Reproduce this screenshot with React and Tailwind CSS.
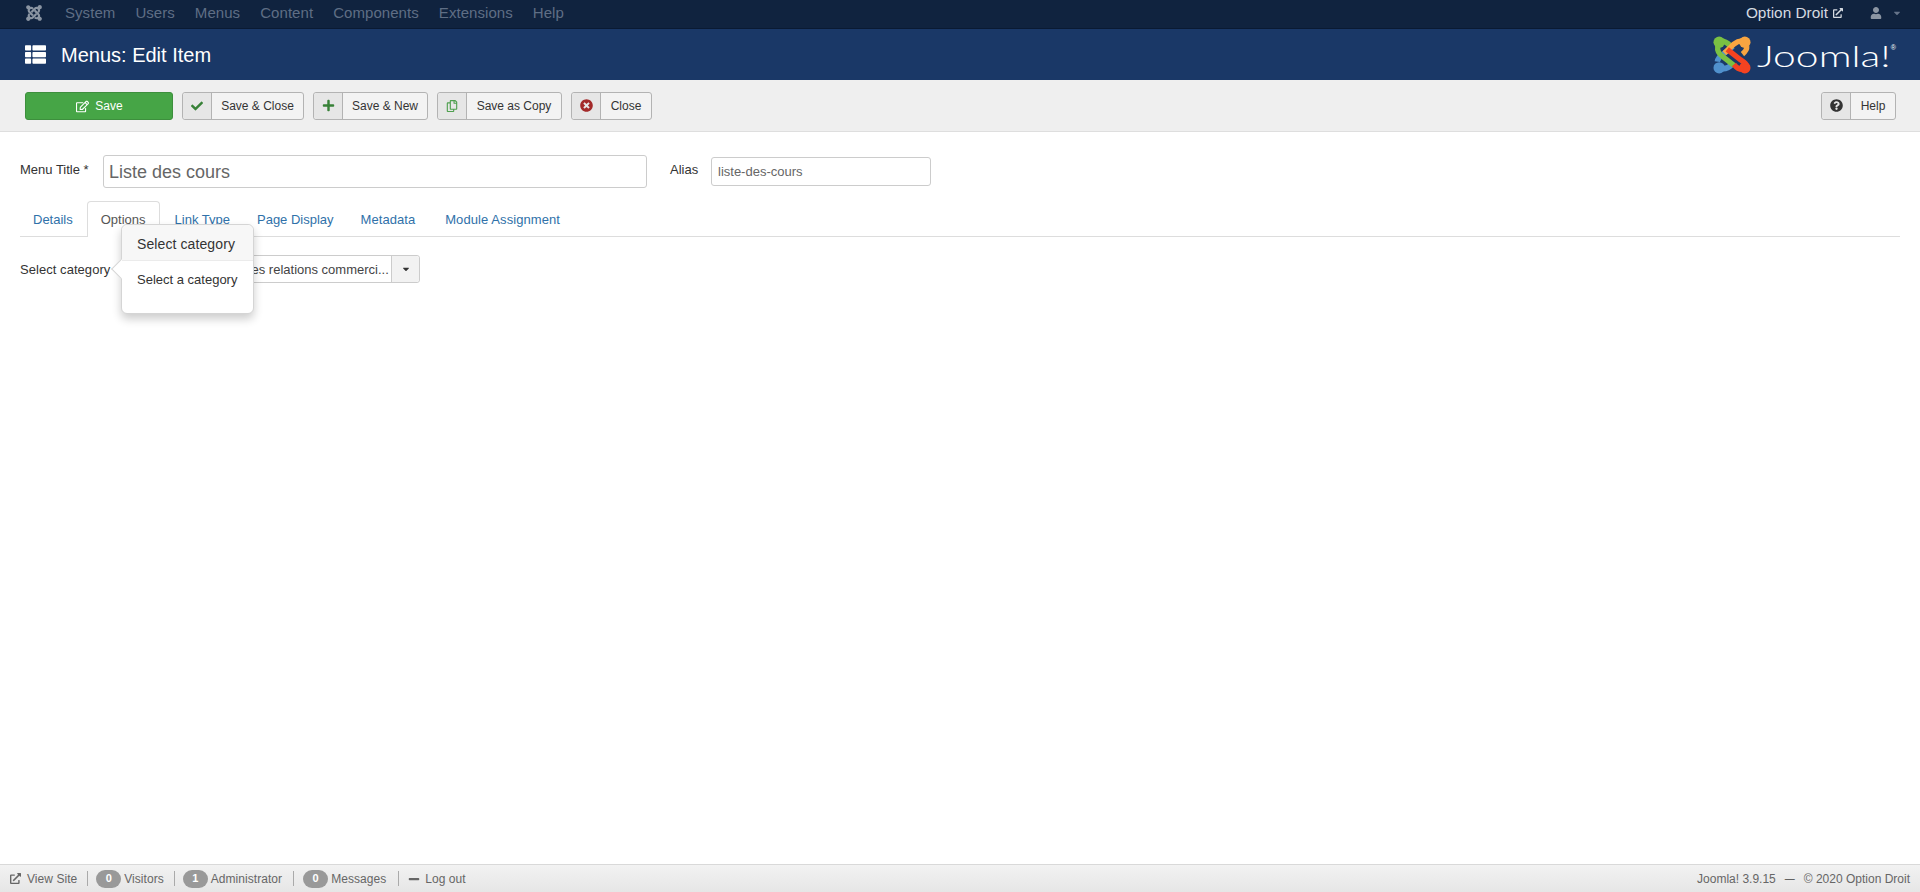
import React from "react";
import { FaJoomla, FaRegEdit, FaCheck, FaPlus, FaRegCopy, FaTimesCircle, FaQuestionCircle, FaThList, FaUser, FaCaretDown, FaExternalLinkAlt, FaMinus } from "react-icons/fa";

function Logo() {
  return (
    <svg width="38" height="38" viewBox="0 0 40 40" fill="none" strokeWidth="5.6" strokeLinecap="butt">
      <g stroke="#5091cd">
        <circle cx="6.5" cy="33.5" r="6" fill="#5091cd" stroke="none" />
        <path d="M4.5 27 Q5 23 10 19.5 L21 11" />
        <path d="M8 34 Q14 36 20 30" />
      </g>
      <g stroke="#7ac143">
        <circle cx="6.5" cy="6.5" r="6" fill="#7ac143" stroke="none" />
        <path d="M5 11 Q4 17 10 21.5 L22 31" />
        <path d="M8 5.5 Q13 5 18 10" />
      </g>
      <g stroke="#f9a541">
        <circle cx="33.5" cy="6.5" r="6" fill="#f9a541" stroke="none" />
        <path d="M32 5.5 Q27 4.5 22 8.5 L12 18" />
        <path d="M35.5 11 Q36 15 31 19" />
      </g>
      <g stroke="#f44321">
        <circle cx="33.5" cy="33.5" r="6" fill="#f44321" stroke="none" />
        <path d="M15 14 L29 25 Q35 29 35 30" />
        <path d="M32 35 Q27 36 22 30" />
      </g>
    </svg>
  );
}

function ToolButton({ icon, label, width }) {
  return (
    <button className={`flex h-[28px] items-stretch rounded-[3px] border border-[#b3b3b3] bg-[#f3f3f3] text-[12px] text-[#333] ${width}`}>
      <span className="flex w-[29px] shrink-0 items-center justify-center rounded-l-[3px] border-r border-[#b3b3b3] bg-[#e6e6e6]">{icon}</span>
      <span className="flex flex-1 items-center justify-center pt-px">{label}</span>
    </button>
  );
}

function Pill({ n }) {
  return (
    <span className="mr-[3px] inline-flex h-[18px] w-[25px] items-center justify-center rounded-[9px] bg-[#999] text-[11px] font-bold text-white">{n}</span>
  );
}

const Sep = ({ wide }) => <span className={`ml-[10px] h-[15px] w-px bg-[#aaa] ${wide ? "mr-[9px]" : "mr-[8px]"}`} />;

export default function App() {
  const menus = ["System", "Users", "Menus", "Content", "Components", "Extensions", "Help"];
  return (
    <div className="flex h-screen flex-col overflow-hidden bg-white font-['Liberation_Sans',Arial,sans-serif] text-[13px] text-[#333]">
      <div className="flex h-[29px] shrink-0 items-center border-b border-[#0a1a33] bg-[#10233f] pb-[2px] pl-[25px] pr-[18px]">
        <FaJoomla className="mr-[22px] text-[18px] text-[#8b95a3]" />
        <div className="flex gap-[20px]">
          {menus.map((m) => (
            <span key={m} className="text-[15px] tracking-[0.06px] text-[#5f6e85]">{m}</span>
          ))}
        </div>
        <span className="ml-auto flex items-center text-[15.4px] text-[#d5dae1]">
          Option Droit
          <FaExternalLinkAlt className="ml-[5px] text-[10px]" />
        </span>
        <FaUser className="ml-[27px] text-[12px] text-[#8b95a3]" />
        <FaCaretDown className="ml-[10px] text-[10px] text-[#66748a]" />
      </div>

      <div className="flex h-[51px] shrink-0 items-center bg-[#1a3867] pl-[25px] pr-[24px]">
        <FaThList className="mr-[15px] text-[21px] text-white" />
        <h1 className="text-[20px] font-normal text-white">Menus: Edit Item</h1>
        <div className="ml-auto flex items-center">
          <Logo />
          <span className="ml-[6px] w-[132px] origin-left scale-x-[1.36] font-['Lato',sans-serif] text-[30px] leading-[40px] font-light whitespace-nowrap text-white">Joomla!</span>
          <span className="mb-[12px] ml-[2px] text-[7px] text-white">®</span>
        </div>
      </div>

      <div className="flex h-[52px] shrink-0 items-center gap-[9px] border-b border-[#dedede] bg-[#efefef] pl-[25px] pr-[24px]">
        <button className="flex h-[28px] w-[148px] items-center justify-center gap-[6px] rounded-[3px] border border-[#3d8f3d] bg-[#46a546] pl-[1px] pt-px text-[12px] text-white">
          <FaRegEdit className="text-[13px]" /> Save
        </button>
        <ToolButton width="w-[122px]" label="Save & Close" icon={<FaCheck className="text-[12px] text-[#378137]" />} />
        <ToolButton width="w-[115px]" label="Save & New" icon={<FaPlus className="text-[13px] text-[#378137]" />} />
        <ToolButton width="w-[125px]" label="Save as Copy" icon={<FaRegCopy className="text-[12px] text-[#4fa04f]" />} />
        <ToolButton width="w-[81px]" label="Close" icon={<FaTimesCircle className="text-[13px] text-[#a32a2a]" />} />
        <div className="ml-auto">
          <ToolButton width="w-[75px]" label="Help" icon={<FaQuestionCircle className="text-[13px] text-[#333]" />} />
        </div>
      </div>

      <main className="flex-1 px-[20px]">
        <div className="mt-[23px] flex items-start">
          <label className="mt-[5px] w-[83px] shrink-0">Menu Title *</label>
          <div className="flex h-[33px] w-[544px] items-center rounded-[3px] border border-[#ccc] px-[5px] pt-[2px] text-[18px] text-[#666]">Liste des cours</div>
          <label className="ml-[23px] mt-[5px] w-[41px] shrink-0">Alias</label>
          <div className="mt-[2px] flex h-[29px] w-[220px] items-center rounded-[3px] border border-[#ccc] px-[6px] text-[13px] text-[#666]">liste-des-cours</div>
        </div>

        <div className="mt-[13px] flex h-[36px] border-b border-[#ddd] text-[13px] text-[#3071a9]">
          <span className="mr-[1px] px-[13px] pt-[9px]">Details</span>
          <span className="-mb-px mr-[2px] h-[36px] rounded-t-[4px] border border-b-0 border-[#ddd] bg-white px-[13px] pt-[8px] text-[#555]">Options</span>
          <span className="mr-[1px] px-[13px] pt-[9px]">Link Type</span>
          <span className="mr-[1px] px-[13px] pt-[9px]">Page Display</span>
          <span className="mr-[4px] px-[13px] pt-[9px] tracking-[0.05px]">Metadata</span>
          <span className="px-[13px] pt-[9px] tracking-[0.08px]">Module Assignment</span>
        </div>

        <div className="relative mt-[18px] flex items-center">
          <label className="w-[180px] shrink-0 pt-px tracking-[0.05px]">Select category</label>
          <div className="flex h-[28px] w-[220px] items-stretch rounded-[3px] border border-[#ccc] text-[#444]">
            <span className="min-w-0 flex-1 pl-[5px] leading-[27px] whitespace-nowrap">Cours des relations commerci...</span>
            <span className="flex w-[28px] shrink-0 items-center justify-center rounded-r-[3px] border-l border-[#ccc] bg-[#f2f2f2]">
              <FaCaretDown className="text-[10px] text-[#333]" />
            </span>
          </div>

          <div className="absolute left-[101px] top-[-31px] h-[90px] w-[133px] rounded-[6px] border border-[#d5d5d5] bg-white shadow-[0_5px_10px_rgba(0,0,0,0.2)]">
            <span className="absolute left-[-8px] top-[37px] h-[14px] w-[14px] rotate-45 border-b border-l border-[#d5d5d5] bg-white" />
            <div className="relative h-[36px] rounded-t-[6px] border-b border-[#ebebeb] bg-[#f7f7f7] px-[15px] text-[14px] leading-[38px] tracking-[0.1px]">Select category</div>
            <div className="relative px-[15px] pt-[9px] text-[13px]">Select a category</div>
          </div>
        </div>
      </main>

      <footer className="flex h-[28px] shrink-0 items-center border-t border-[#d9d9d9] bg-gradient-to-b from-[#f2f2f2] to-[#e6e6e6] pl-[10px] pr-[10px] text-[12px] tracking-[0.05px] text-[#666]">
        <FaExternalLinkAlt className="mr-[6px] text-[11px]" />
        View Site
        <Sep />
        <Pill n="0" />Visitors
        <Sep />
        <Pill n="1" /><span className="mr-[1px]">Administrator</span>
        <Sep wide />
        <Pill n="0" /><span className="mr-[2px]">Messages</span>
        <Sep />
        <FaMinus className="mr-[5px] ml-[1px] text-[12px]" />Log out
        <span className="ml-auto flex items-center tracking-normal">Joomla! 3.9.15<span className="mx-[9px] text-[10px] text-[#444]">—</span>© 2020 Option Droit</span>
      </footer>
    </div>
  );
}
